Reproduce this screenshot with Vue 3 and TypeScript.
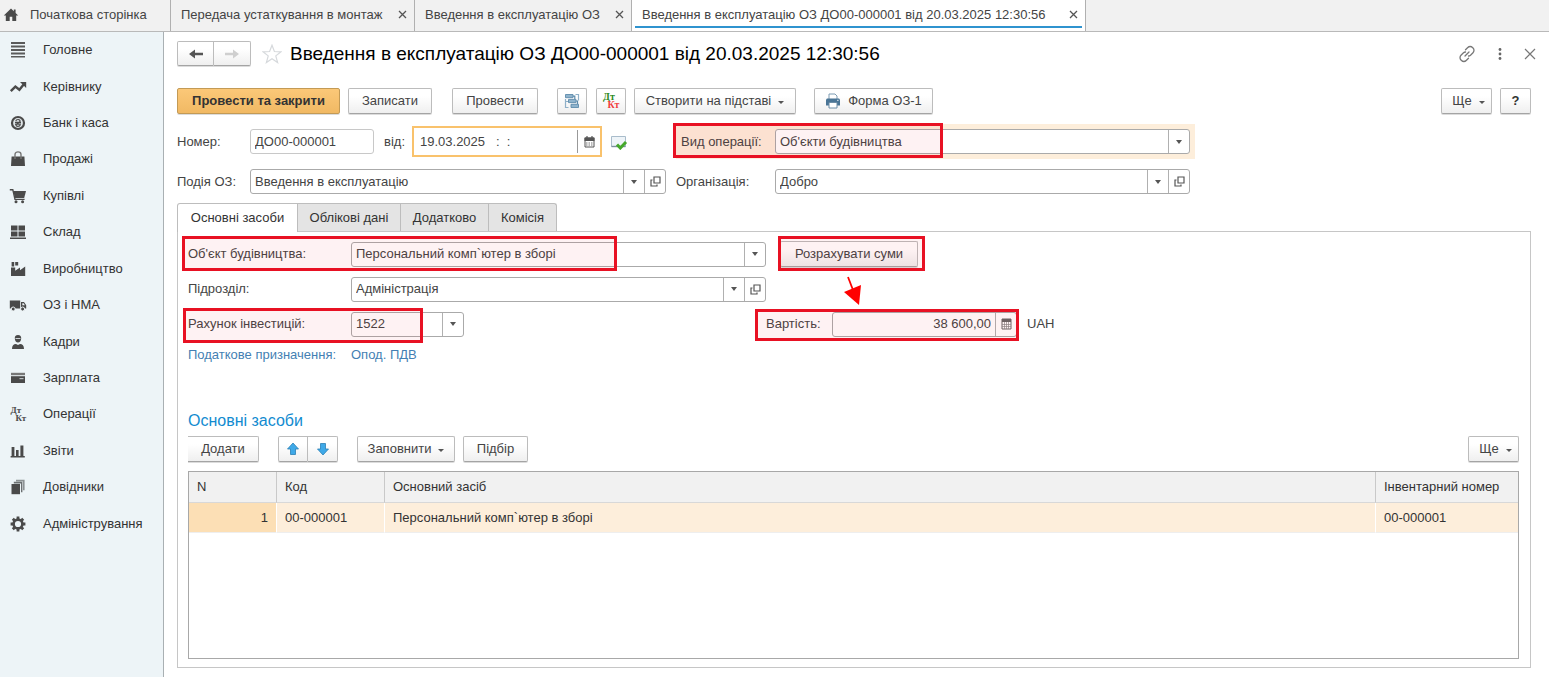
<script setup lang="ts">
import { ref } from 'vue'

interface Section {
  id: string
  title: string
}

const sections: Section[] = [
  { id: 'main', title: 'Головне' },
  { id: 'chart', title: 'Керівнику' },
  { id: 'bank', title: 'Банк і каса' },
  { id: 'bag', title: 'Продажі' },
  { id: 'cart', title: 'Купівлі' },
  { id: 'store', title: 'Склад' },
  { id: 'factory', title: 'Виробництво' },
  { id: 'truck', title: 'ОЗ і НМА' },
  { id: 'person', title: 'Кадри' },
  { id: 'card', title: 'Зарплата' },
  { id: 'dtkt', title: 'Операції' },
  { id: 'bars', title: 'Звіти' },
  { id: 'books', title: 'Довідники' },
  { id: 'gear', title: 'Адміністрування' },
]

const windows = [
  { title: 'Передача устаткування в монтаж', size: 'w-a', active: false },
  { title: 'Введення в експлуатацію ОЗ', size: 'w-b', active: false },
  { title: 'Введення в експлуатацію ОЗ ДО00-000001 від 20.03.2025 12:30:56', size: 'w-c', active: true },
]

const pages = [
  { title: 'Основні засоби', size: 'p-a' },
  { title: 'Облікові дані', size: 'p-b' },
  { title: 'Додатково', size: 'p-c' },
  { title: 'Комісія', size: 'p-d' },
]
const page = ref(0)

const docNumber = ref('ДО00-000001')
const docDate = ref('19.03.2025\u00a0\u00a0\u00a0:\u00a0\u00a0:')
const cost = ref('38 600,00')

const rows = [{ n: 1, code: '00-000001', name: 'Персональний комп`ютер в зборі', inv: '00-000001' }]
</script>

<template>
  <div class="app">
    <header class="windows">
      <button class="home" type="button">
        <svg width="16" height="16" viewBox="0 0 16 16"><path d="M8 1.500 0.800 8.600h2V14h3.900V9.800h2.600V14h3.900V8.600h2L12.600 6V2.600h-1.800v1.700z" fill="#4a4a4a" /></svg>
        <span>Початкова сторінка</span>
      </button>
      <div v-for="w in windows" :key="w.title" class="win" :class="[w.size, { active: w.active }]">
        <button class="win-name" type="button">{{ w.title }}</button>
        <button class="win-close" type="button" aria-label="Закрити">
          <svg width="9" height="9" viewBox="0 0 9 9"><path d="M1 1l7 7M8 1l-7 7" stroke="#555" stroke-width="1.300" /></svg>
        </button>
      </div>
    </header>

    <div class="body">
      <nav class="side">
        <ul>
          <li v-for="s in sections" :key="s.id">
            <a href="#">
              <svg class="side-icon" width="18" height="18" viewBox="0 0 18 18" fill="#4a4a4a">
                <path v-if="s.id === 'main'" d="M2 1h14v2H2zM2 4.500h14v2H2zM2 8h14v2H2zM2 11.500h14v2H2zM2 15h14v1.500H2z" fill="#5a5a5a" />
                <template v-else-if="s.id === 'chart'">
                  <path d="M1.800 13.200 6.400 8.600l4 3.200L14.600 6.600" fill="none" stroke="#4a4a4a" stroke-width="2.400" />
                  <path d="M11 4h6.200v6z" />
                </template>
                <template v-else-if="s.id === 'bank'">
                  <circle cx="9" cy="9" r="6" fill="#dfe5e8" stroke="#4a4a4a" stroke-width="2.200" />
                  <path d="M6.800 7C7.300 5 11.200 5 11 7.200c-.2 1.600-4 2-4 3.800 0 1.800 3.600 1.800 4.200 0M6 8.300h6M6 10.100h6" fill="none" stroke="#4a4a4a" stroke-width="1.200" />
                </template>
                <template v-else-if="s.id === 'bag'">
                  <path d="M2.600 6.500h12.800L16 16H2z" />
                  <path d="M6 9V4.500C6 1 12 1 12 4.500V9" fill="none" stroke="#777" stroke-width="1.400" />
                </template>
                <template v-else-if="s.id === 'cart'">
                  <path d="M4.200 4H17l-1.800 7H6z" />
                  <path d="M.8 2.700h3L6 12.400h9.600" fill="none" stroke="#4a4a4a" stroke-width="1.400" />
                  <circle cx="7" cy="14.700" r="1.500" /><circle cx="13.600" cy="14.700" r="1.500" />
                </template>
                <path v-else-if="s.id === 'store'" d="M2 2.500h6.500v5H2zM9.500 2.500H16v5H9.500zM2 8.500h6.500v5H2zM9.500 8.500H16v5H9.500zM1 14.600h16v1.500H1z" />
                <path v-else-if="s.id === 'factory'" d="M2 16V7.500h4.200v3.200L11 7.500v2.700L16.200 6.500V16zM2.600 2h2.600v4.500H2.600zM6.200 2h3v3.400h-3z" />
                <template v-else-if="s.id === 'truck'">
                  <path d="M.8 4.500h10.400v8H.8zM12 6h3l2.200 3.200v3.300H12z" />
                  <path d="M13.300 7.200h1.300l1.300 2h-2.600z" fill="#eef4f7" />
                  <g stroke="#eef4f7"><circle cx="4.200" cy="13" r="2" /><circle cx="13.600" cy="13" r="2" /></g>
                </template>
                <template v-else-if="s.id === 'person'">
                  <path d="M9 2c2.400 0 3.400 1.600 3.200 3.600C12 8 10.800 9.600 9 9.600S6 8 5.800 5.600C5.600 3.600 6.600 2 9 2z" />
                  <path d="M6.500 5.500h5" stroke="#eef4f7" stroke-width=".8" />
                  <path d="M3 16c0-3.500 1.500-4.800 4-5l2 1 2-1c2.500.2 4 1.500 4 5z" />
                </template>
                <template v-else-if="s.id === 'card'">
                  <path d="M2 3.800h14v2.400H2z" fill="#777" />
                  <path d="M2 7.200h14V14H2z" />
                  <path d="M10.500 9h4v1.200h-4z" fill="#b9bfc2" />
                </template>
                <g v-else-if="s.id === 'dtkt'" font-family="Liberation Serif, serif" font-weight="700" font-size="9">
                  <text x="1.500" y="8">Дт</text><text x="6.500" y="16">Кт</text>
                </g>
                <path v-else-if="s.id === 'bars'" d="M2.600 5h2.800v9H2.600zM7 8h2.600v6H7zM11.400 3.500h3V14h-3zM1.600 14h14.200v1.500H1.600z" />
                <template v-else-if="s.id === 'books'">
                  <path d="M7 1.800h8.600v10.500H14V3.500H7z" fill="#8d9294" />
                  <path d="M4.800 3.800h8.600v10.500H12V5.500H4.800z" fill="#6b6f71" />
                  <path d="M2.500 6H11v10.200H2.500z" />
                </template>
                <template v-else>
                  <circle cx="9" cy="9" r="4.400" fill="none" stroke="#4a4a4a" stroke-width="2.600" />
                  <path d="M9 1.600v3M9 13.400v3M1.600 9h3M13.400 9h3M3.800 3.800l2 2M12.200 12.200l2 2M14.200 3.800l-2 2M5.800 12.200l-2 2" stroke="#4a4a4a" stroke-width="2.800" />
                </template>
              </svg>
              <span>{{ s.title }}</span>
            </a>
          </li>
        </ul>
      </nav>

      <main class="main">
        <div class="caption">
          <div class="pair history">
            <button class="btn" type="button" aria-label="Назад">
              <svg width="16" height="12" viewBox="0 0 16 12"><path d="M1 6l6-4.500v3.200h8v2.600H7v3.200z" fill="#555" /></svg>
            </button>
            <button class="btn" type="button" aria-label="Вперед" disabled>
              <svg width="16" height="12" viewBox="0 0 16 12"><path d="M15 6L9 1.500v3.200H1v2.600h8v3.200z" fill="#cfcfcf" /></svg>
            </button>
          </div>
          <button class="plain star" type="button" aria-label="В обране">
            <svg width="20" height="20" viewBox="0 0 20 20"><path d="M10 1.200l2.400 6.300 6.600.3-5.200 4.100 1.800 6.600L10 14.800l-5.600 3.700 1.800-6.600L1 7.800l6.600-.3z" fill="#fff" stroke="#d6d9dc" stroke-width="1.200" /></svg>
          </button>
          <h1>Введення в експлуатацію ОЗ ДО00-000001 від 20.03.2025 12:30:56</h1>
          <div class="tools">
            <button class="plain" type="button" aria-label="Посилання">
              <svg width="18" height="18" viewBox="0 0 18 18" fill="none" stroke="#777" stroke-width="1.300" stroke-linecap="round"><path d="M7.500 4.800l2.300-2.300a3.300 3.300 0 0 1 4.700 0l.5.500a3.300 3.300 0 0 1 0 4.700l-2.500 2.500a3 3 0 0 1-2 .8M10.500 13.200l-2.300 2.300a3.300 3.300 0 0 1-4.700 0l-.5-.5a3.300 3.300 0 0 1 0-4.700l2.500-2.500a3 3 0 0 1 2-.8M7 11l4-4" /></svg>
            </button>
            <button class="plain" type="button" aria-label="Меню">
              <svg width="4" height="14" viewBox="0 0 4 14" fill="#666"><circle cx="2" cy="2.500" r="1.400" /><circle cx="2" cy="7" r="1.400" /><circle cx="2" cy="11.500" r="1.400" /></svg>
            </button>
            <button class="plain" type="button" aria-label="Закрити форму">
              <svg width="12" height="12" viewBox="0 0 12 12"><path d="M1 1l10 10M11 1L1 11" stroke="#777" stroke-width="1.200" /></svg>
            </button>
          </div>
        </div>

        <div class="commands">
          <button class="btn primary" type="button">Провести та закрити</button>
          <button class="btn write" type="button">Записати</button>
          <button class="btn post" type="button">Провести</button>
          <button class="btn square" type="button" aria-label="Структура підпорядкованості">
            <svg width="16" height="16" viewBox="0 0 16 16"><path d="M4.500 8.500H1.500v6h3M11.500 1.500h3v6M1.500 8V6" fill="none" stroke="#8fb0c8" stroke-width="1.200" /><g fill="#8fb3cc" stroke="#5d8bab" stroke-width=".9"><path d="M1.500 1.500h7.500v3.200H1.500zM4.500 6.400h7.500v3.200H4.500zM7 11.300h7.500v3.200H7z" /></g><path d="M9 3.200h1.800v3M12 8h1.500v3" fill="none" stroke="#5d8bab" stroke-width="1.200" /></svg>
          </button>
          <button class="btn square" type="button" aria-label="Проведення">
            <svg width="18" height="18" viewBox="0 0 18 18" font-family="Liberation Serif, serif" font-weight="700" font-size="10"><text x="1" y="8" fill="#2c8a1c">Дт</text><text x="5.500" y="16" fill="#f23d3d">Кт</text></svg>
          </button>
          <button class="btn based" type="button">Створити на підставі<i class="caret small"></i></button>
          <button class="btn print" type="button">
            <svg width="16" height="16" viewBox="0 0 16 16"><path d="M4 6V1h6l2 2v3" fill="#fff" stroke="#7d9bb3" /><path d="M2 5.500h12l1 1v6H1v-6z" fill="#4a7596" /><path d="M4 9.500h8V15H4z" fill="#fff" stroke="#6b8ca6" /><path d="M12.200 7.300h1.300" stroke="#fff" /></svg>
            <span>Форма ОЗ-1</span>
          </button>
          <div class="right">
            <button class="btn more" type="button">Ще<i class="caret small"></i></button>
            <button class="btn help" type="button">?</button>
          </div>
        </div>

        <div class="form">
          <div class="cell left tall">
            <label class="label" for="num">Номер:</label>
            <input id="num" v-model="docNumber" class="box number" type="text" />
            <label class="from" for="date">від:</label>
            <div class="date">
              <input id="date" v-model="docDate" type="text" />
              <button type="button" aria-label="Календар">
                <svg width="11" height="12" viewBox="0 0 11 12"><path d="M1 2h9v9H1z" fill="#fff" stroke="#555" /><path d="M.5 1.500h10v3.500H.5z" fill="#555" /><path d="M3 0v2M8 0v2" stroke="#555" stroke-width="1.200" /><path d="M2 7h7M2 9h7" stroke="#777" stroke-dasharray="1.500 1" /></svg>
              </button>
            </div>
            <svg class="posted" width="18" height="16" viewBox="0 0 18 16"><path d="M1.500 2.500h14v10h-14z" fill="#eef4f8" stroke="#a9bccb" /><path d="M1.500 12.500h14" stroke="#7c8f9d" stroke-width="1.400" /><path d="M7 10.500l3.300 3.500L16 8" fill="none" stroke="#45a82a" stroke-width="3" /></svg>
          </div>
          <div class="cell kind tall">
            <label class="label" for="kind">Вид операції:</label>
            <div class="combo">
              <select id="kind"><option>Об'єкти будівництва</option></select>
              <button type="button" aria-label="Вибрати вид операції"><i class="caret"></i></button>
            </div>
            <i class="mark mark-kind"></i>
          </div>
          <div class="cell left">
            <label class="label" for="event">Подія ОЗ:</label>
            <div class="combo">
              <select id="event"><option>Введення в експлуатацію</option></select>
              <button type="button" aria-label="Вибрати подію"><i class="caret"></i></button>
              <button type="button" aria-label="Відкрити подію">
                <svg width="11" height="11" viewBox="0 0 11 11" fill="none" stroke="#555" stroke-width="1.200"><path d="M4 1h6v6H4zM2.500 4H1v6h6V8.500" /></svg>
              </button>
            </div>
          </div>
          <div class="cell org">
            <label class="label" for="org">Організація:</label>
            <div class="combo">
              <select id="org"><option>Добро</option></select>
              <button type="button" aria-label="Вибрати організацію"><i class="caret"></i></button>
              <button type="button" aria-label="Відкрити організацію">
                <svg width="11" height="11" viewBox="0 0 11 11" fill="none" stroke="#555" stroke-width="1.200"><path d="M4 1h6v6H4zM2.500 4H1v6h6V8.500" /></svg>
              </button>
            </div>
          </div>
        </div>

        <div class="pages" role="tablist">
          <button
            v-for="(p, i) in pages"
            :key="p.title"
            type="button"
            role="tab"
            :aria-selected="page === i"
            :class="[p.size, { on: page === i }]"
            @click="page = i"
          >{{ p.title }}</button>
        </div>

        <section class="panel">
          <div class="fields">
            <div class="line">
              <label class="label" for="object">Об'єкт будівництва:</label>
              <div class="combo">
                <select id="object"><option>Персональний комп`ютер в зборі</option></select>
                <button type="button" aria-label="Вибрати об'єкт"><i class="caret"></i></button>
              </div>
              <i class="mark mark-object"></i>
            </div>
            <div class="line">
              <div class="calc">
                <button class="btn" type="button">Розрахувати суми</button>
                <i class="mark mark-calc"></i>
                <svg class="arrow" width="20" height="30" viewBox="0 0 20 30"><path d="M5 1l5 13" stroke="#f00" stroke-width="1.800" /><path d="M1 16l17-7-2 20z" fill="#f00" /></svg>
              </div>
            </div>
            <div class="line">
              <label class="label" for="dept">Підрозділ:</label>
              <div class="combo">
                <select id="dept"><option>Адміністрація</option></select>
                <button type="button" aria-label="Вибрати підрозділ"><i class="caret"></i></button>
                <button type="button" aria-label="Відкрити підрозділ">
                  <svg width="11" height="11" viewBox="0 0 11 11" fill="none" stroke="#555" stroke-width="1.200"><path d="M4 1h6v6H4zM2.500 4H1v6h6V8.500" /></svg>
                </button>
              </div>
            </div>
            <div class="line"></div>
            <div class="line">
              <label class="label" for="account">Рахунок інвестицій:</label>
              <div class="combo account">
                <select id="account"><option>1522</option></select>
                <button type="button" aria-label="Вибрати рахунок"><i class="caret"></i></button>
              </div>
              <i class="mark mark-account"></i>
            </div>
            <div class="line">
              <label class="cost-label" for="cost">Вартість:</label>
              <div class="combo cost">
                <input id="cost" v-model="cost" type="text" />
                <button type="button" aria-label="Калькулятор">
                  <svg width="11" height="12" viewBox="0 0 11 12"><path d="M1 1h9v10H1z" fill="#fff" stroke="#666" /><path d="M1 1h9v3H1z" fill="#666" /><path d="M3.500 4v7M5.500 4v7M7.500 4v7M1 6.500h9M1 8.500h9" stroke="#888" stroke-width=".7" /></svg>
                </button>
              </div>
              <span class="currency">UAH</span>
              <i class="mark mark-cost"></i>
            </div>
          </div>
          <a class="tax" href="#"><span>Податкове призначення:</span><span>Опод. ПДВ</span></a>

          <h2>Основні засоби</h2>
          <div class="commands list">
            <button class="btn add" type="button">Додати</button>
            <div class="pair move">
              <button class="btn" type="button" aria-label="Вгору">
                <svg width="14" height="14" viewBox="0 0 14 14"><path d="M7 1l5.500 6H9.500v5.500h-5V7h-3z" fill="#3fa9e8" stroke="#2b80b5" stroke-width=".8" /></svg>
              </button>
              <button class="btn" type="button" aria-label="Вниз">
                <svg width="14" height="14" viewBox="0 0 14 14"><path d="M7 13L1.500 7h3V1.500h5V7h3z" fill="#3fa9e8" stroke="#2b80b5" stroke-width=".8" /></svg>
              </button>
            </div>
            <button class="btn fill" type="button">Заповнити<i class="caret small"></i></button>
            <button class="btn pick" type="button">Підбір</button>
            <div class="right"><button class="btn more" type="button">Ще<i class="caret small"></i></button></div>
          </div>

          <div class="grid">
            <table>
              <colgroup><col class="c-n" /><col class="c-code" /><col /><col class="c-inv" /></colgroup>
              <thead><tr><th>N</th><th>Код</th><th>Основний засіб</th><th>Інвентарний номер</th></tr></thead>
              <tbody>
                <tr v-for="r in rows" :key="r.n"><td>{{ r.n }}</td><td>{{ r.code }}</td><td>{{ r.name }}</td><td>{{ r.inv }}</td></tr>
              </tbody>
            </table>
          </div>
        </section>
      </main>
    </div>
  </div>
</template>

<style>
body { margin: 0; background: #fff; }
</style>

<style scoped>
.app, .app * { box-sizing: border-box; }
.app {
  display: flex; flex-direction: column; min-height: 100vh;
  font: 13px/18px "Liberation Sans", Arial, sans-serif; color: #444;
}
button, input, select { font: inherit; color: inherit; margin: 0; }
button { cursor: pointer; }
svg { flex: none; display: block; }

.windows { display: flex; height: 32px; background: #f1f1f1; border-bottom: 1px solid #b9b9b9; }
.home, .win-name, .win-close, .plain { border: 0; background: none; padding: 0; }
.home { display: flex; align-items: center; gap: 11px; width: 171px; padding: 0 0 2px 3px; border-right: 1px solid #b0b0b0; white-space: nowrap; }
.win { display: flex; align-items: center; justify-content: space-between; padding: 0 7px 2px 10px; border-right: 1px solid #b0b0b0; white-space: nowrap; position: relative; }
.w-a { min-width: 244px; }
.w-b { min-width: 217px; }
.w-c { min-width: 454px; }
.win.active { background: #fff; }
.win.active::after { content: ""; position: absolute; left: 3px; right: 3px; bottom: 3px; height: 2px; background: #2f93cf; }

.body { display: flex; flex: 1; }
.side { flex: none; width: 164px; background: #edf4f7; border-right: 1px solid #a9b0b3; }
.side ul { list-style: none; margin: 0; padding: 0; height: 510px; display: grid; grid-auto-rows: 1fr; }
.side li { display: flex; }
.side a { display: flex; align-items: center; gap: 16px; flex: 1; padding-left: 9px; color: #333; text-decoration: none; }

.main { flex: 1; min-width: 0; display: flex; flex-direction: column; padding: 9px 18px 9px 13px; }
.caption { display: flex; align-items: center; height: 25px; }
.pair { display: flex; }
.pair .btn { padding: 0; border-radius: 2px 0 0 2px; }
.pair .btn + .btn { border-left: 0; border-radius: 0 2px 2px 0; }
.history .btn { height: 25px; width: 37px; }
.star { margin-left: 11px; }
h1 { margin: 0 0 0 8px; font-size: 19px; line-height: 24px; font-weight: 400; color: #000; white-space: nowrap; }
.tools { display: flex; align-items: center; gap: 22px; margin: 0 -5px 0 auto; }

.btn {
  display: inline-flex; align-items: center; justify-content: center; height: 26px; padding: 0 8px;
  border: 1px solid #bcbcbc; border-bottom-color: #a4a4a4; border-radius: 2px;
  background: linear-gradient(#fff 30%, #efefef); white-space: nowrap; color: #444;
  box-shadow: 0 1px 0 #dcdcdc;
}
.commands { display: flex; height: 26px; margin-top: 22px; }
.commands .right { display: flex; gap: 8px; margin-left: auto; }
.primary { min-width: 163px; background: linear-gradient(#fbc878, #f1b964); border-color: #c39a55; color: #333; font-weight: 700; }
.write { min-width: 84px; margin-left: 8px; }
.post { min-width: 86px; margin-left: 20px; }
.square { width: 30px; padding: 0; margin-left: 9px; }
.post + .square { margin-left: 19px; }
.based { min-width: 162px; margin-left: 8px; }
.print { min-width: 119px; margin-left: 18px; gap: 7px; }
.more { min-width: 51px; padding: 0 6px 0 10px; }
.help { width: 31px; font-weight: 700; color: #333; }
.caret { display: inline-block; border: 3px solid transparent; border-top: 4px solid #555; border-bottom: 0; }
.caret.small { border-width: 3px 3px 0; margin: 2px 0 0 7px; }

.form { display: grid; grid-template-columns: minmax(0, 499fr) minmax(0, 519fr) minmax(0, 336fr); row-gap: 10px; margin-top: 10px; }
.cell { display: flex; align-items: center; height: 25px; position: relative; }
.cell.tall { height: 35px; }
.cell.left { grid-column: 1; padding-right: 10px; }
.cell.kind, .cell.org { grid-column: 2; padding-right: 5px; }
.cell.kind { background: #fdeedb; }
.cell .label { flex: none; width: 73px; white-space: nowrap; }
.kind .label, .org .label { width: 99px; }
.kind .label { padding-left: 5px; }
.box, .combo { height: 25px; border: 1px solid #aaa; border-radius: 3px; background: #fff; }
.number { flex: none; width: 124px; padding: 0 4px; border-color: #c8c8c8; }
.from { flex: none; margin-left: 10px; width: 28px; }
.date { display: flex; flex: 1; min-width: 0; height: 31px; border: 2px solid #f9c26c; padding: 2px 0; background: #fff; }
.date input { flex: 1; min-width: 0; border: 0; padding: 0 6px; background: none; outline: 0; }
.date button { flex: none; width: 23px; border: 0; border-left: 1px solid #999; background: none; padding: 0; display: flex; align-items: center; justify-content: center; }
.posted { margin: 0 38px 0 8px; }
.combo { display: flex; flex: 1; min-width: 0; overflow: hidden; }
.combo select, .combo input { flex: 1; min-width: 0; appearance: none; border: 0; background: none; padding: 0 4px; outline: 0; }
.combo button { flex: none; width: 21px; border: 0; border-left: 1px solid #b0b0b0; background: none; padding: 0; display: flex; align-items: center; justify-content: center; }

.mark { position: absolute; border: 3px solid #e81123; background: rgba(232, 17, 35, 0.055); pointer-events: none; }
.mark-kind { left: -3px; top: -1px; width: 270px; height: 35px; }
.mark-object { left: -6px; top: -5px; width: 435px; height: 35px; }
.mark-calc { left: -2px; right: -7px; top: -5px; height: 35px; }
.mark-account { left: -5px; top: -3px; width: 240px; height: 35px; }
.mark-cost { left: -11px; top: -2px; width: 264px; height: 32px; }
.arrow { position: absolute; left: 63px; top: 35px; }

.pages { display: flex; height: 28px; margin-top: 9px; }
.pages button { border: 1px solid #bdbdbd; border-left-width: 0; border-bottom: 0; background: #e4e4e4; padding: 0; color: #333; white-space: nowrap; }
.pages button:first-child { border-left-width: 1px; border-radius: 3px 0 0 0; }
.pages button:last-child { border-radius: 0 3px 0 0; }
.pages button.on { background: #fff; position: relative; margin-bottom: -1px; }
.p-a { min-width: 121px; }
.p-b { min-width: 103px; }
.p-c { min-width: 88px; }
.p-d { min-width: 68px; }

.panel { flex: 1; display: flex; flex-direction: column; border: 1px solid #c6c6c6; padding: 9px 11px 8px 10px; }
.fields { display: grid; grid-template-columns: minmax(0, 578fr) minmax(0, 753fr); grid-auto-rows: 26px; row-gap: 9px; }
.line { display: flex; align-items: center; position: relative; }
.line .label { flex: none; width: 163px; }
.line .combo.account { flex: none; width: 113px; }
.calc { position: relative; margin-left: 14px; }
.calc .btn { min-width: 138px; }
.cost-label { width: 66px; }
.line .combo.cost { flex: none; width: 185px; }
.cost input { text-align: right; }
.currency { margin-left: 10px; }
.tax { display: flex; margin-top: 9px; color: #447fb3; text-decoration: none; }
.tax span:first-child { width: 163px; }
h2 { margin: 47px 0 0; font-size: 16px; line-height: 20px; font-weight: 400; color: #128bd0; }
.commands.list { margin-top: 5px; }
.add { min-width: 71px; border-left: 0; border-radius: 0 2px 2px 0; }
.move { margin-left: 19px; }
.move .btn { width: 30px; }
.fill { min-width: 98px; margin-left: 19px; }
.pick { min-width: 65px; margin-left: 8px; }

.grid { flex: 1; margin-top: 9px; border: 1px solid #a8a8a8; }
table { width: 100%; table-layout: fixed; border-collapse: separate; border-spacing: 0; color: #333; }
.c-n { width: 88px; }
.c-code { width: 108px; }
.c-inv { width: 142px; }
th { height: 31px; padding: 0 8px; text-align: left; font-weight: 400; background: #f1f1f1; border-right: 1px solid #c9c9c9; border-bottom: 1px solid #d8d8d8; white-space: nowrap; }
td { height: 30px; padding: 0 8px; background: #fdeedb; border-right: 1px solid #fff; border-bottom: 1px solid #eee; white-space: nowrap; }
th:last-child, td:last-child { border-right: 0; }
td:first-child { background: #fcdfb5; text-align: right; }
</style>
